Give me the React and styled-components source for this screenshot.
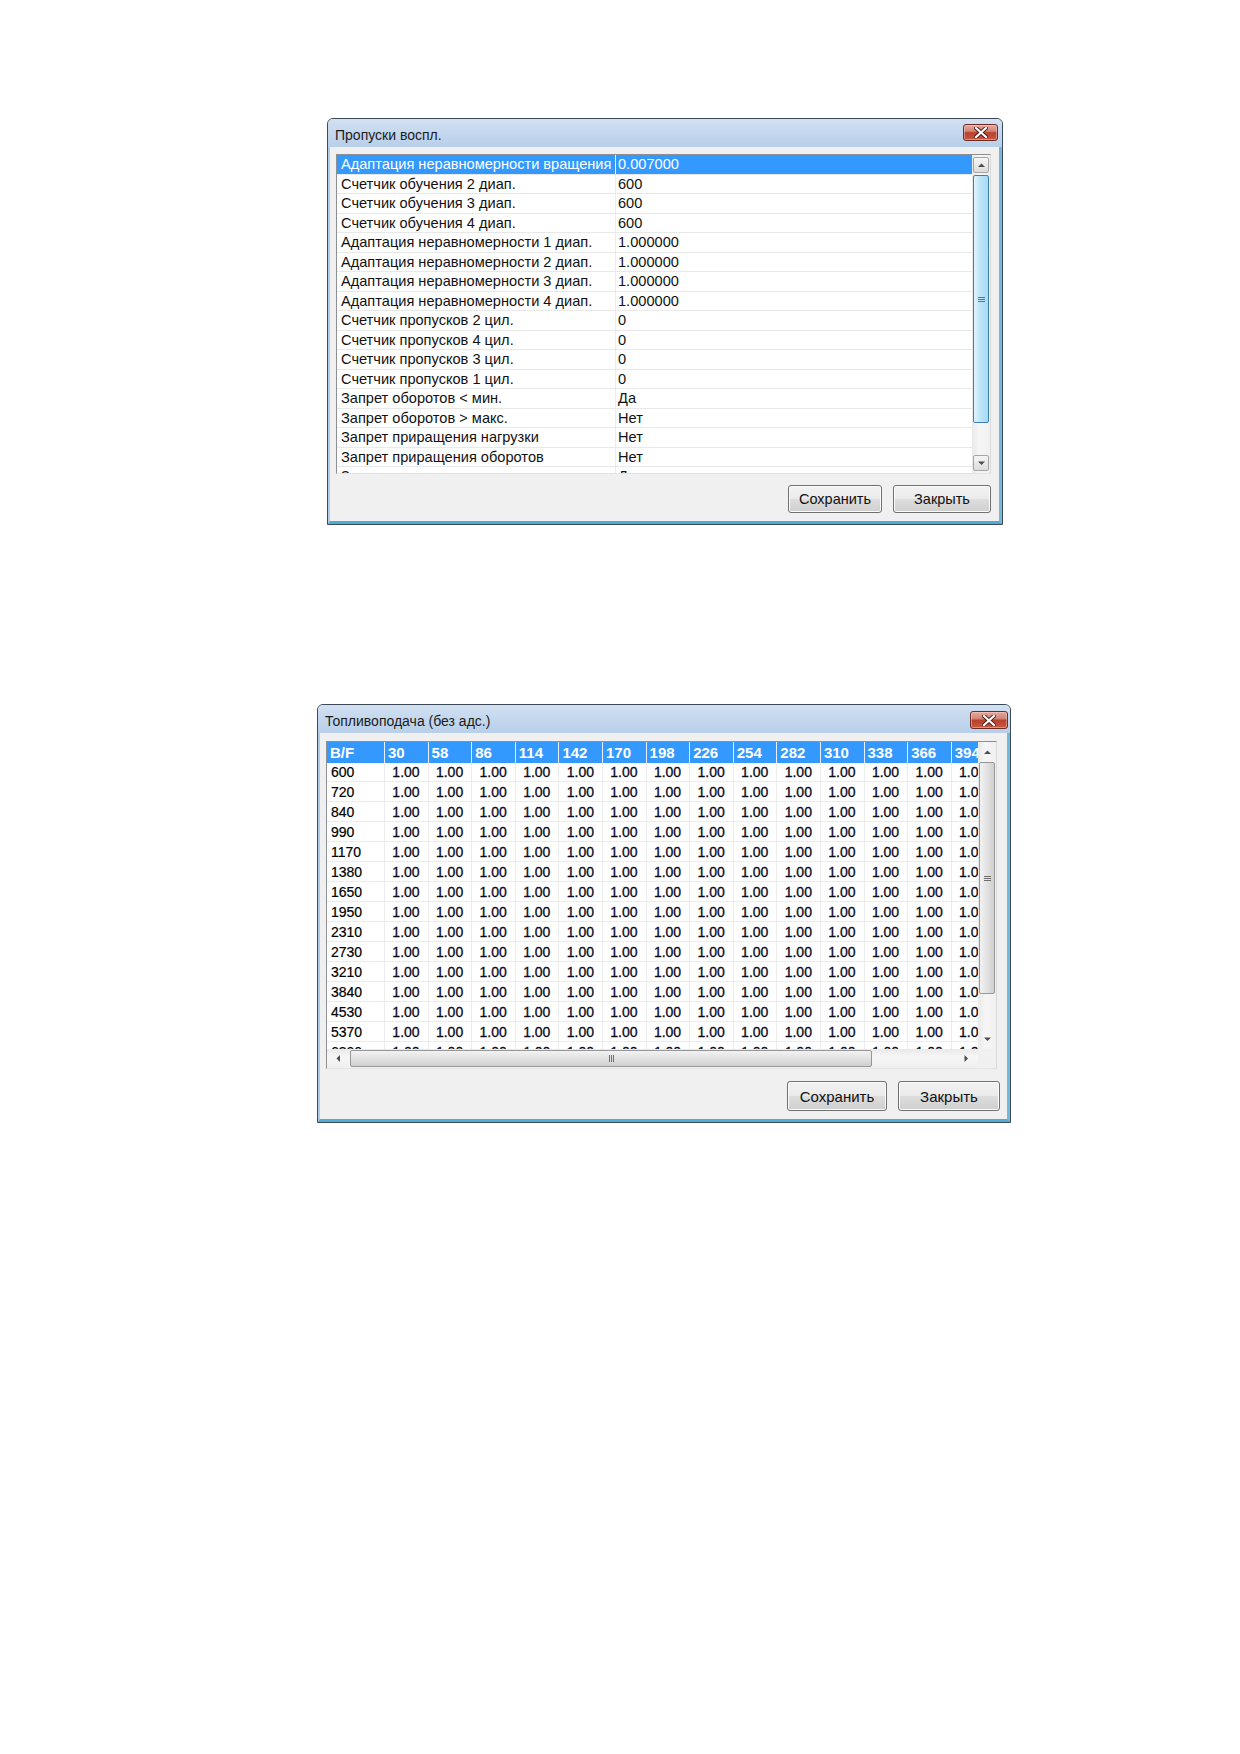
import React from "react";
import styled, { createGlobalStyle } from "styled-components";

const GlobalStyle = createGlobalStyle`
  html, body { margin: 0; padding: 0; background: #fff; }
  body { font-family: "Liberation Sans", Arial, sans-serif; color: #000; }
`;

const Page = styled.div`
  width: 1240px;
  min-height: 1754px;
  box-sizing: border-box;
  padding-top: 118px;
  display: flex;
  flex-direction: column;
  gap: 179px;
`;

const Window = styled.div`
  margin-left: ${(p) => p.$left}px;
  width: ${(p) => p.$w}px;
  height: ${(p) => p.$h}px;
  box-sizing: border-box;
  border: 1px solid #3e4a58;
  border-radius: 6px 6px 0 0;
  display: flex;
  flex-direction: column;
  background: #bcd4ec;
  overflow: hidden;
`;

const TitleBar = styled.div`
  height: 28px;
  flex: none;
  display: flex;
  justify-content: space-between;
  align-items: flex-start;
  padding: 0 ${(p) => p.$right || 4}px 0 7px;
  background: linear-gradient(#d3e1f1 0%, #c4d7ee 50%, #b8cfe9 100%);
  font-size: 14px;
  color: #1b1b1b;
`;

const TitleText = styled.span`
  margin-top: 8px;
`;

const CloseBtn = styled.div`
  margin-top: ${(p) => p.$top || 5}px;
  width: ${(p) => p.$w || 35}px;
  height: ${(p) => p.$h || 17}px;
  box-sizing: border-box;
  border: 1px solid #6d2b23;
  border-radius: 3px;
  background: linear-gradient(#e3a89d 0%, #d4877a 40%, #b9412e 52%, #c65a41 100%);
  box-shadow: inset 0 0 0 1px rgba(255, 220, 210, 0.45);
  display: flex;
  align-items: center;
  justify-content: center;
`;

const Client = styled.div`
  flex: 1;
  display: flex;
  flex-direction: column;
  background: #f0f0f0;
  border-left: 2px solid #b0cde8;
  border-right: 3px solid #72b9dc;
  border-bottom: 3px solid #4cadd5;
  padding: ${(p) => p.$pad};
`;

const ListFrame = styled.div`
  height: ${(p) => p.$h}px;
  margin-right: ${(p) => p.$mr || 0}px;
  flex: none;
  display: grid;
  grid-template-columns: 1fr ${(p) => p.$sb}px;
  grid-template-rows: ${(p) => (p.$hs ? `1fr ${p.$hs}px` : "1fr")};
  border-top: 1px solid #8c8f94;
  border-left: 1px solid #8c8f94;
  border-right: 1px solid #dadada;
  border-bottom: 1px solid #e3e3e3;
  background: #fff;
  box-sizing: border-box;
`;

const Viewport = styled.div`
  overflow: hidden;
  position: relative;
`;

const PropRow = styled.div`
  height: 19.5px;
  box-sizing: border-box;
  display: grid;
  grid-template-columns: 279px 1fr;
  border-bottom: 1px solid #e8e8e8;
  font-size: 14.6px;
  line-height: 18px;
  background: ${(p) => (p.$sel ? "#3399ff" : "#fff")};
  color: ${(p) => (p.$sel ? "#fff" : "#111")};
`;

const PropName = styled.div`
  padding-left: 4px;
  white-space: nowrap;
  overflow: hidden;
  border-right: 1px solid ${(p) => (p.$sel ? "#fff" : "#ececec")};
`;

const PropValue = styled.div`
  padding-left: 2px;
  white-space: nowrap;
`;

const VScroll = styled.div`
  display: flex;
  flex-direction: column;
  background: linear-gradient(90deg, #e9e9e9, #f6f6f6 40%, #f0f0f0);
  padding: 2px 1px;
  gap: 2px;
  box-sizing: border-box;
  grid-row: 1;
  grid-column: 2;
`;

const HScroll = styled.div`
  display: flex;
  background: linear-gradient(#e9e9e9, #f6f6f6 40%, #f0f0f0);
  padding: 1px 2px;
  gap: 2px;
  box-sizing: border-box;
`;

const Corner = styled.div`
  background: #f0f0f0;
`;

const ArrowBtn = styled.div`
  flex: none;
  width: ${(p) => (p.$h ? "19px" : "auto")};
  height: ${(p) => (p.$h ? "auto" : "16px")};
  box-sizing: border-box;
  border: 1px solid ${(p) => (p.$box ? "#a5a5a5" : "transparent")};
  border-radius: 2px;
  background: ${(p) => (p.$box ? "linear-gradient(#f6f6f6, #dcdcdc)" : "transparent")};
  display: flex;
  align-items: center;
  justify-content: center;
`;

const Thumb = styled.div`
  flex: ${(p) => p.$flex};
  box-sizing: border-box;
  border: 1px solid ${(p) => (p.$hot ? "#3c7fb1" : "#979797")};
  border-radius: 2px;
  background: ${(p) =>
    p.$hot
      ? "linear-gradient(90deg, #e3f4fc, #bde4f7 45%, #a7d9f5)"
      : p.$horiz
      ? "linear-gradient(#f2f2f2, #e2e2e2 50%, #cfcfcf)"
      : "linear-gradient(90deg, #f2f2f2, #e2e2e2 50%, #cfcfcf)"};
  display: flex;
  align-items: center;
  justify-content: center;
`;

const Spacer = styled.div`
  flex: ${(p) => p.$flex};
`;

const Grip = styled.div`
  display: flex;
  flex-direction: ${(p) => (p.$horiz ? "row" : "column")};
  gap: 1px;
  & > i {
    display: block;
    background: ${(p) => p.$c || "#5a6a7a"};
    width: ${(p) => (p.$horiz ? "1px" : "7px")};
    height: ${(p) => (p.$horiz ? "7px" : "1px")};
  }
`;

const ButtonRow = styled.div`
  display: flex;
  justify-content: flex-end;
  gap: ${(p) => p.$gap}px;
  margin-top: ${(p) => p.$mt}px;
  padding-right: ${(p) => p.$pr || 0}px;
`;

const Button = styled.div`
  width: ${(p) => p.$w}px;
  height: ${(p) => p.$h}px;
  box-sizing: border-box;
  border: 1px solid #707070;
  border-radius: 3px;
  background: linear-gradient(#f2f2f2 0%, #ebebeb 48%, #dddddd 52%, #cfcfcf 100%);
  box-shadow: inset 0 0 0 1px #fcfcfc;
  display: flex;
  align-items: center;
  justify-content: center;
  font-size: ${(p) => p.$fs}px;
  color: #111;
`;

const Table = styled.div`
  display: grid;
  grid-template-columns: 58px repeat(14, 43.6px);
  grid-auto-rows: 20px;
  font-size: 14px;
  line-height: 20px;
`;

const HeadCell = styled.div`
  height: 21px;
  background: #3399ff;
  color: #fff;
  font-weight: bold;
  font-size: 15px;
  padding-left: 3px;
  border-right: 1px solid #e8f2ff;
  white-space: nowrap;
  overflow: hidden;
  box-sizing: border-box;
  line-height: 21px;
`;

const RowHead = styled.div`
  padding-left: 4px;
  border-right: 1px solid #ececec;
  border-bottom: 1px solid #ececec;
  box-sizing: border-box;
  -webkit-text-stroke: 0.2px #000;
`;

const Cell = styled.div`
  text-align: right;
  padding-right: 8px;
  border-right: 1px solid #ececec;
  border-bottom: 1px solid #ececec;
  box-sizing: border-box;
  white-space: nowrap;
  overflow: hidden;
  color: #0a0a1e;
  -webkit-text-stroke: 0.3px #0a0a1e;
`;

const Arrow = ({ dir, color = "#4d4d4d" }) => {
  const pts = {
    up: "0,4 3.5,0.5 7,4",
    down: "0,0.5 3.5,4 7,0.5",
    left: "4,0 0.5,3.5 4,7",
    right: "0.5,0 4,3.5 0.5,7",
  }[dir];
  const vert = dir === "up" || dir === "down";
  return (
    <svg width={vert ? 7 : 5} height={vert ? 5 : 7} viewBox={vert ? "0 0 7 5" : "0 0 5 7"}>
      <polygon points={pts} fill={color} />
    </svg>
  );
};

const CloseX = () => (
  <svg width="14" height="11" viewBox="0 0 14 11">
    <path d="M2 1 L12 10 M12 1 L2 10" stroke="#4a1a14" strokeWidth="4" strokeLinecap="square" />
    <path d="M2 1 L12 10 M12 1 L2 10" stroke="#fff" strokeWidth="2.2" strokeLinecap="square" />
  </svg>
);

const props = [
  ["Адаптация неравномерности вращения", "0.007000"],
  ["Счетчик обучения 2 диап.", "600"],
  ["Счетчик обучения 3 диап.", "600"],
  ["Счетчик обучения 4 диап.", "600"],
  ["Адаптация неравномерности 1 диап.", "1.000000"],
  ["Адаптация неравномерности 2 диап.", "1.000000"],
  ["Адаптация неравномерности 3 диап.", "1.000000"],
  ["Адаптация неравномерности 4 диап.", "1.000000"],
  ["Счетчик пропусков 2 цил.", "0"],
  ["Счетчик пропусков 4 цил.", "0"],
  ["Счетчик пропусков 3 цил.", "0"],
  ["Счетчик пропусков 1 цил.", "0"],
  ["Запрет оборотов < мин.", "Да"],
  ["Запрет оборотов > макс.", "Нет"],
  ["Запрет приращения нагрузки", "Нет"],
  ["Запрет приращения оборотов", "Нет"],
  ["Запрет подачи топлива", "Да"],
];

const cols = [30, 58, 86, 114, 142, 170, 198, 226, 254, 282, 310, 338, 366, 394];
const rpm = [600, 720, 840, 990, 1170, 1380, 1650, 1950, 2310, 2730, 3210, 3840, 4530, 5370, 6300];

const GripLines = ({ horiz, c }) => (
  <Grip $horiz={horiz} $c={c}>
    <i />
    <i />
    <i />
  </Grip>
);

const App = () => (
  <>
    <GlobalStyle />
    <Page>
      <Window $left={327} $w={676} $h={407}>
        <TitleBar>
          <TitleText>Пропуски воспл.</TitleText>
          <CloseBtn>
            <CloseX />
          </CloseBtn>
        </TitleBar>
        <Client $pad="7px 8px 7px 6px">
          <ListFrame $h={320} $sb={18}>
            <Viewport>
              {props.map(([name, value], i) => (
                <PropRow key={i} $sel={i === 0}>
                  <PropName $sel={i === 0}>{name}</PropName>
                  <PropValue>{value}</PropValue>
                </PropRow>
              ))}
            </Viewport>
            <VScroll>
              <ArrowBtn $box>
                <Arrow dir="up" />
              </ArrowBtn>
              <Thumb $hot $flex="0 0 248px">
                <GripLines c="#3c7fb1" />
              </Thumb>
              <Spacer $flex="1" />
              <ArrowBtn $box>
                <Arrow dir="down" />
              </ArrowBtn>
            </VScroll>
          </ListFrame>
          <ButtonRow $gap={11} $mt={11}>
            <Button $w={94} $h={28} $fs={14.5}>
              Сохранить
            </Button>
            <Button $w={98} $h={28} $fs={14.5}>
              Закрыть
            </Button>
          </ButtonRow>
        </Client>
      </Window>

      <Window $left={317} $w={694} $h={419}>
        <TitleBar $right={2}>
          <TitleText>Топливоподача (без адс.)</TitleText>
          <CloseBtn $top={6} $w={38} $h={18}>
            <CloseX />
          </CloseBtn>
        </TitleBar>
        <Client $pad="8px 7px 6px 6px">
          <ListFrame $h={328} $sb={18} $hs={19} $mr={3}>
            <Viewport>
              <Table>
                <HeadCell>B/F</HeadCell>
                {cols.map((c) => (
                  <HeadCell key={c}>{c}</HeadCell>
                ))}
                {rpm.map((r) => (
                  <React.Fragment key={r}>
                    <RowHead>{r}</RowHead>
                    {cols.map((c) => (
                      <Cell key={c}>1.00</Cell>
                    ))}
                  </React.Fragment>
                ))}
              </Table>
            </Viewport>
            <VScroll>
              <ArrowBtn>
                <Arrow dir="up" />
              </ArrowBtn>
              <Thumb $flex="0 0 232px">
                <GripLines c="#6e6e6e" />
              </Thumb>
              <Spacer $flex="1" />
              <ArrowBtn>
                <Arrow dir="down" />
              </ArrowBtn>
            </VScroll>
            <HScroll>
              <ArrowBtn $h>
                <Arrow dir="left" />
              </ArrowBtn>
              <Thumb $horiz $flex="0 0 522px">
                <GripLines horiz c="#6e6e6e" />
              </Thumb>
              <Spacer $flex="1" />
              <ArrowBtn $h>
                <Arrow dir="right" />
              </ArrowBtn>
            </HScroll>
            <Corner />
          </ListFrame>
          <ButtonRow $gap={11} $mt={12} $pr={0}>
            <Button $w={100} $h={30} $fs={15}>
              Сохранить
            </Button>
            <Button $w={102} $h={30} $fs={15}>
              Закрыть
            </Button>
          </ButtonRow>
        </Client>
      </Window>
    </Page>
  </>
);

export default App;
